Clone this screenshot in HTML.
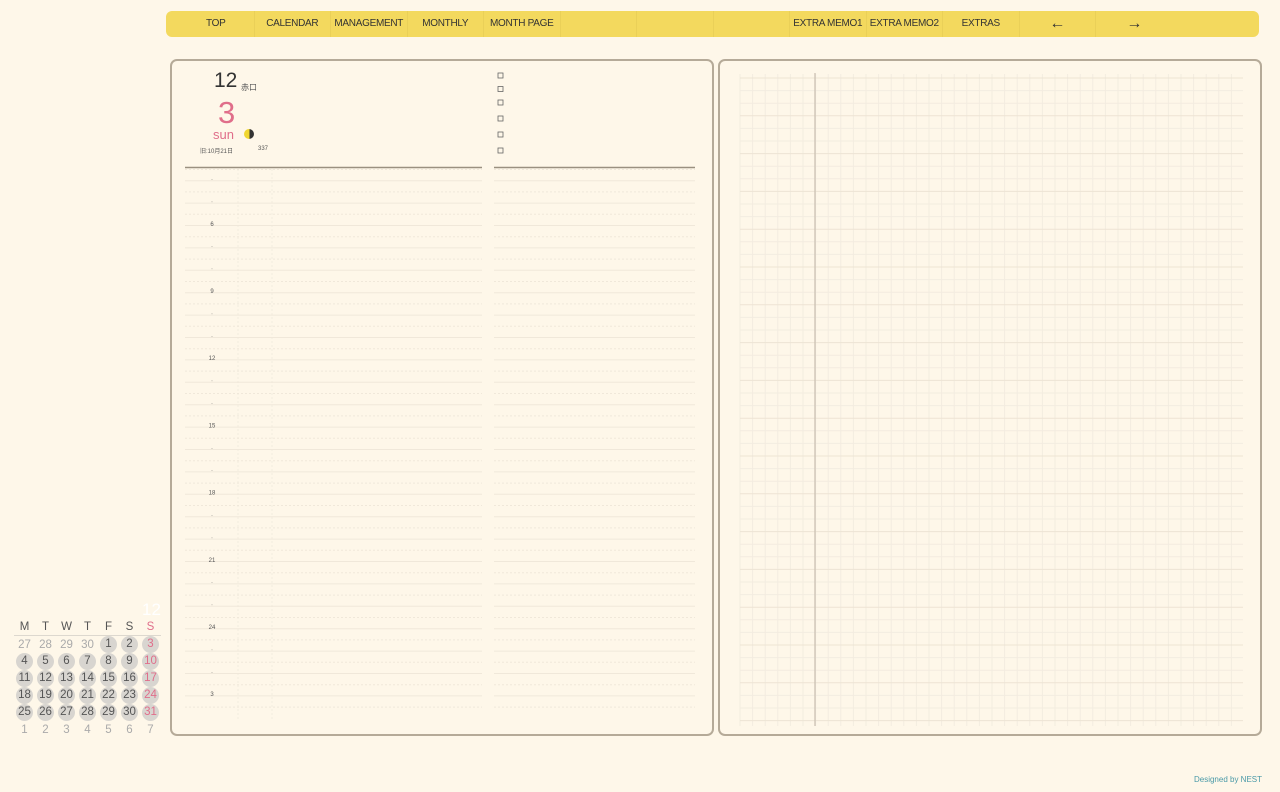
<!DOCTYPE html><html><head><meta charset="utf-8"><style>
*{margin:0;padding:0;box-sizing:border-box}
body{width:1280px;height:792px;background:#fef7e9;font-family:"Liberation Sans","Noto Sans CJK JP",sans-serif;position:relative;overflow:hidden;color:#333}
.nav{position:absolute;left:166px;top:11px;width:1093px;height:26px;background:#f3d95e;border-radius:6px;display:flex;padding-left:12px}
.nav div{width:76.5px;height:26px;line-height:26px;text-align:center;font-size:10px;color:#333;border-right:1px solid #ead058;letter-spacing:-.3px}
.nav div:last-child{border:none}
.page{position:absolute;top:59px;height:677px;border:2px solid #b5aa98;border-radius:7px;background:#fef7e9}
.abs{position:absolute}
.cal{position:absolute;left:14px;top:618px;width:150px;font-size:11.5px;color:#555}
.cal .r{display:flex;height:17px;align-items:center}
.cal .c{width:21px;text-align:center;position:relative}
.cal .b span{display:inline-block;width:17px;height:17px;line-height:17px;border-radius:50%;background:#d8d5d0}
</style></head><body>
<div class="nav"><div>TOP</div><div>CALENDAR</div><div>MANAGEMENT</div><div>MONTHLY</div><div>MONTH PAGE</div><div></div><div></div><div></div><div>EXTRA MEMO1</div><div>EXTRA MEMO2</div><div>EXTRAS</div><div style="font-size:16px">←</div><div style="font-size:16px">→</div></div>

<div class="page" style="left:170px;width:544px">
<div class="abs" style="left:42px;top:8px;font-size:21px;color:#333">12</div>
<div class="abs" style="left:69px;top:21px;font-size:8px;color:#555">赤口</div>
<div class="abs" style="left:46px;top:34px;font-size:31px;color:#e06e8a">3</div>
<div class="abs" style="left:41px;top:66px;font-size:13px;color:#e06e8a">sun</div>
<div class="abs" style="left:72px;top:68px;width:10px;height:10px;border-radius:50%;background:linear-gradient(90deg,#f0d630 55%,#333 55%)"></div>
<div class="abs" style="left:28px;top:85px;font-size:6px;color:#555">旧:10月21日</div>
<div class="abs" style="left:86px;top:85px;font-size:6px;color:#555">337</div>
<svg class="abs" style="left:0;top:0" width="540" height="673">
<g fill="none" stroke="#666" stroke-width=".8">
<rect x="326" y="12" width="5" height="5"/><rect x="326" y="25.5" width="5" height="5"/><rect x="326" y="39" width="5" height="5"/><rect x="326" y="55" width="5" height="5"/><rect x="326" y="71" width="5" height="5"/><rect x="326" y="87" width="5" height="5"/></g>
<line x1="13" y1="106.5" x2="310" y2="106.5" stroke="#9a9080" stroke-width="1.5"/>
<line x1="322" y1="106.5" x2="523" y2="106.5" stroke="#9a9080" stroke-width="1.5"/>
<g stroke="#f3ecdf" stroke-width="1">
<line x1="66" y1="108" x2="66" y2="660" stroke-dasharray="2 2"/>
<line x1="100" y1="108" x2="100" y2="660" stroke-dasharray="2 2"/>
</g>
<g id="ls" stroke="#f0e8da" stroke-width="1"></g>
<g font-size="6" fill="#555" text-anchor="middle" id="lb"></g>
</svg>
</div>

<div class="page" style="left:718px;width:544px">
<svg class="abs" style="left:0;top:0" width="540" height="673" id="g"></svg>
</div>

<div class="cal">
<div class="abs" style="left:128px;top:-18px;font-size:17px;color:#fff">12</div>
<div class="r"><div class="c">M</div><div class="c">T</div><div class="c">W</div><div class="c">T</div><div class="c">F</div><div class="c">S</div><div class="c" style="color:#e06e8a">S</div></div>
<div style="border-top:1.5px solid #ddd8cf;width:147px"></div>
<div class="r" style="color:#aaa"><div class="c">27</div><div class="c">28</div><div class="c">29</div><div class="c">30</div><div class="c b" style="color:#555"><span>1</span></div><div class="c b" style="color:#555"><span>2</span></div><div class="c b" style="color:#e06e8a"><span>3</span></div></div>
<div class="r"><div class="c b"><span>4</span></div><div class="c b"><span>5</span></div><div class="c b"><span>6</span></div><div class="c b"><span>7</span></div><div class="c b"><span>8</span></div><div class="c b"><span>9</span></div><div class="c b" style="color:#e06e8a"><span>10</span></div></div>
<div class="r"><div class="c b"><span>11</span></div><div class="c b"><span>12</span></div><div class="c b"><span>13</span></div><div class="c b"><span>14</span></div><div class="c b"><span>15</span></div><div class="c b"><span>16</span></div><div class="c b" style="color:#e06e8a"><span>17</span></div></div>
<div class="r"><div class="c b"><span>18</span></div><div class="c b"><span>19</span></div><div class="c b"><span>20</span></div><div class="c b"><span>21</span></div><div class="c b"><span>22</span></div><div class="c b"><span>23</span></div><div class="c b" style="color:#e06e8a"><span>24</span></div></div>
<div class="r"><div class="c b"><span>25</span></div><div class="c b"><span>26</span></div><div class="c b"><span>27</span></div><div class="c b"><span>28</span></div><div class="c b"><span>29</span></div><div class="c b"><span>30</span></div><div class="c b" style="color:#e06e8a"><span>31</span></div></div>
<div class="r" style="color:#aaa"><div class="c">1</div><div class="c">2</div><div class="c">3</div><div class="c">4</div><div class="c">5</div><div class="c">6</div><div class="c">7</div></div>
</div>
<div class="abs" style="right:18px;top:775px;font-size:8px;color:#4a9aa8">Designed by NEST</div>
<script>
var ns="http://www.w3.org/2000/svg",ls=document.getElementById("ls"),lb=document.getElementById("lb");
for(var i=0;i<49;i++){var y=108+i*11.2;[[13,310],[322,523]].forEach(function(s){var l=document.createElementNS(ns,"line");l.setAttribute("x1",s[0]);l.setAttribute("x2",s[1]);l.setAttribute("y1",y+.5);l.setAttribute("y2",y+.5);if(i%2==0)l.setAttribute("stroke-dasharray","2 2");ls.appendChild(l);});}
var labs=["·","·","6","·","·","9","·","·","12","·","·","15","·","·","18","·","·","21","·","·","24","·","·","3"];
labs.forEach(function(t,i){var e=document.createElementNS(ns,"text");e.setAttribute("x",40);e.setAttribute("y",120+i*22.4);e.textContent=t;lb.appendChild(e);});
var g=document.getElementById("g");
for(var x=20;x<=523;x+=12.6){var l=document.createElementNS(ns,"line");l.setAttribute("x1",x);l.setAttribute("x2",x);l.setAttribute("y1",13);l.setAttribute("y2",665);l.setAttribute("stroke","#f3ece0");g.appendChild(l);}
for(var y=17,k=0;y<=665;y+=12.6,k++){var l=document.createElementNS(ns,"line");l.setAttribute("y1",y);l.setAttribute("y2",y);l.setAttribute("x1",20);l.setAttribute("x2",523);l.setAttribute("stroke",k%3==0?"#ede4d4":"#f3ece0");g.appendChild(l);}
var v=document.createElementNS(ns,"line");v.setAttribute("x1",95);v.setAttribute("x2",95);v.setAttribute("y1",12);v.setAttribute("y2",665);v.setAttribute("stroke","#c8beb0");v.setAttribute("stroke-width","1.2");g.appendChild(v);
</script>
</body></html>
